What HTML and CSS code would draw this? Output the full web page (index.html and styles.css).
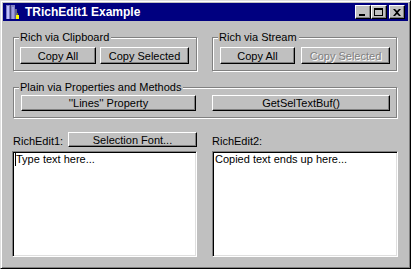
FILE: index.html
```html
<!DOCTYPE html>
<html lang="en">
<head>
    <meta charset="UTF-8">
    <meta name="viewport" content="width=device-width, initial-scale=1.0">
    <title>TRichEdit1 Example</title>
    <link rel="stylesheet" href="styles.css">
</head>
<body>
    <div class="window">
        <div class="titlebar">
            <svg class="app-icon" width="16" height="16" viewBox="0 0 16 16">
                <rect x="2" y="1" width="9" height="14" fill="#8080c0"/>
                <rect x="3" y="2" width="2" height="13" fill="#c0c0ff"/>
                <rect x="6" y="1" width="1" height="14" fill="#404080"/>
                <rect x="8" y="3" width="2" height="12" fill="#a0a0e0"/>
                <rect x="11" y="5" width="2" height="10" fill="#606090"/>
                <rect x="12" y="11" width="3" height="4" fill="#ffff00"/>
                <rect x="13" y="9" width="1" height="2" fill="#808000"/>
            </svg>
            <span class="title">TRichEdit1 Example</span>
            <div class="title-buttons">
                <button class="tbtn"><span class="ico-min"></span></button>
                <button class="tbtn"><span class="ico-max"></span></button>
                <button class="tbtn tbtn-close">
                    <svg width="8" height="7" viewBox="0 0 8 7">
                        <path d="M0 0h2l2 2 2-2h2L5 3.5 8 7H6L4 5 2 7H0l3-3.5z" fill="#000"/>
                    </svg>
                </button>
            </div>
        </div>

        <div class="content">
            <div class="row-groups">
                <div class="group">
                    <span class="group-label">Rich via Clipboard</span>
                    <button class="btn w-copyall">Copy All</button>
                    <button class="btn w-copysel">Copy Selected</button>
                </div>
                <div class="group group-right">
                    <span class="group-label">Rich via Stream</span>
                    <button class="btn w-copyall2">Copy All</button>
                    <button class="btn w-copysel disabled">Copy Selected</button>
                </div>
            </div>

            <div class="group group-plain">
                <span class="group-label">Plain via Properties and Methods</span>
                <button class="btn w-lines">''Lines'' Property</button>
                <button class="btn w-getsel">GetSelTextBuf()</button>
            </div>

            <div class="row-labels">
                <div class="label-cell">
                    <span class="label">RichEdit1:</span>
                    <button class="btn btn-font">Selection Font...</button>
                </div>
                <div class="label-cell">
                    <span class="label">RichEdit2:</span>
                </div>
            </div>

            <div class="row-memos">
                <div class="memo"><span class="caret"></span>Type text here...</div>
                <div class="memo">Copied text ends up here...</div>
            </div>
        </div>
    </div>
</body>
</html>
```

FILE: styles.css
```css
* {
    box-sizing: border-box;
}

body {
    margin: 0;
    padding: 0;
    font-family: "Liberation Sans", Arial, sans-serif;
    font-size: 11px;
    background-color: #c0c0c0;
}

.window {
    width: 411px;
    height: 269px;
    padding: 2px;
    background-color: #c0c0c0;
    border: 1px solid;
    border-color: #dfdfdf #000 #000 #dfdfdf;
    box-shadow: inset 1px 1px 0 #fff, inset -1px -1px 0 #808080;
}

.titlebar {
    height: 18px;
    display: flex;
    align-items: center;
    padding: 0 3px 0 1px;
    background-color: #000080;
    color: #fff;
}

.app-icon {
    flex-shrink: 0;
}

.title {
    margin-left: 5px;
    font-weight: bold;
    font-size: 12px;
    flex: 1;
}

.title-buttons {
    display: flex;
    align-items: center;
}

.tbtn {
    width: 16px;
    height: 14px;
    padding: 0;
    margin: 0;
    display: flex;
    align-items: center;
    justify-content: center;
    background-color: #c0c0c0;
    border: 1px solid;
    border-color: #fff #000 #000 #fff;
    box-shadow: inset -1px -1px 0 #808080;
}

.tbtn-close {
    margin-left: 2px;
}

.ico-min {
    width: 6px;
    height: 2px;
    background-color: #000;
    margin-top: 6px;
    margin-left: -2px;
}

.ico-max {
    width: 9px;
    height: 8px;
    border: 1px solid #000;
    border-top-width: 2px;
    margin-left: -1px;
}

.content {
    padding: 16px 11px 0 10px;
}

.row-groups {
    display: grid;
    grid-template-columns: 184px 185px;
    column-gap: 15px;
}

.group {
    position: relative;
    display: flex;
    height: 34px;
    padding: 9px 0 0 6px;
    gap: 4px;
    border: 1px solid #808080;
    box-shadow: inset 1px 1px 0 #fff, 1px 1px 0 #fff;
}

.group-right {
    padding-left: 7px;
    gap: 6px;
}

.group-label {
    position: absolute;
    top: -7px;
    left: 5px;
    padding: 0 2px 0 1px;
    line-height: 13px;
    background-color: #c0c0c0;
}

.group-plain {
    margin-top: 16px;
    height: 31px;
    padding: 7px 0 0 7px;
    gap: 16px;
}

.btn {
    height: 17px;
    padding: 0;
    margin: 0;
    font-family: "Liberation Sans", Arial, sans-serif;
    font-size: 11px;
    color: #000;
    background-color: #c0c0c0;
    border: 1px solid;
    border-color: #fff #000 #000 #fff;
    box-shadow: inset -1px -1px 0 #808080;
}

.btn.disabled {
    color: #808080;
    text-shadow: 1px 1px 0 #fff;
}

.w-copyall {
    width: 76px;
}

.w-copyall2 {
    width: 75px;
}

.w-copysel {
    width: 89px;
}

.group-plain .btn {
    height: 16px;
}

.w-lines {
    width: 175px;
}

.w-getsel {
    width: 178px;
}

.row-labels {
    display: grid;
    grid-template-columns: 184px 185px;
    column-gap: 15px;
    margin-top: 14px;
    height: 15px;
}

.label-cell {
    display: flex;
    align-items: flex-end;
}

.label {
    line-height: 13px;
    margin-bottom: -1px;
}

.btn-font {
    height: 15px;
    width: 129px;
    margin-left: auto;
}

.row-memos {
    display: grid;
    grid-template-columns: 184px 186px;
    column-gap: 15px;
    margin-top: 4px;
}

.memo {
    height: 106px;
    padding: 1px 2px;
    line-height: 13px;
    background-color: #fff;
    border: 1px solid;
    border-color: #808080 #fff #fff #808080;
    box-shadow: inset 1px 1px 0 #000, inset -1px -1px 0 #dfdfdf;
    display: flex;
    align-items: flex-start;
}

.memo:first-child {
    margin-left: -1px;
    width: 185px;
}

.caret {
    display: inline-block;
    width: 1px;
    height: 13px;
    background-color: #000;
}
```
